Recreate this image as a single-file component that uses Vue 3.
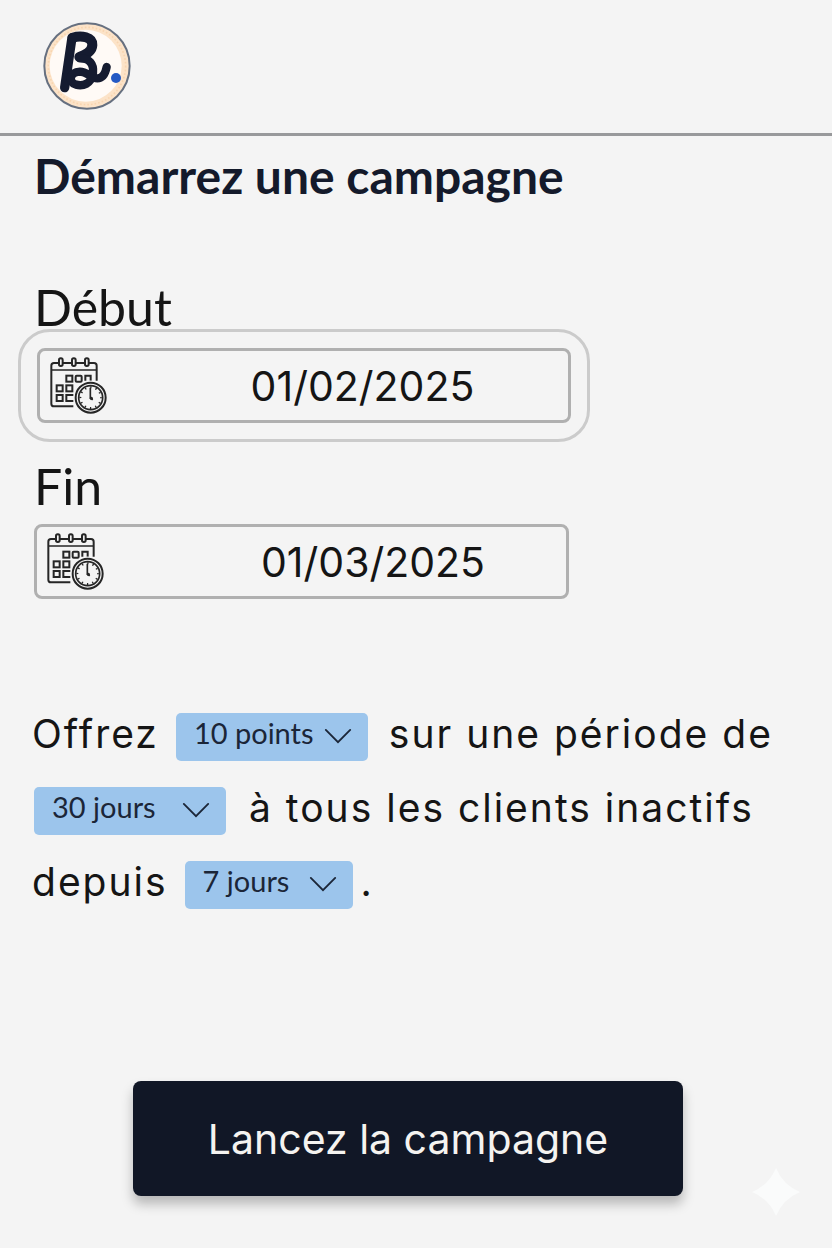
<script setup>
import { ref } from 'vue'

const dates = ref([
  { id: 'debut', label: 'Début', value: '01/02/2025', active: true },
  { id: 'fin', label: 'Fin', value: '01/03/2025', active: false },
])

const points = ref('10 points')
const period = ref('30 jours')
const inactivity = ref('7 jours')
</script>

<template>
  <div class="page">
    <header class="topbar">
      <svg class="logo" viewBox="39 33 264 264" role="img" aria-label="Logo">
        <circle cx="171" cy="165" r="128" fill="#fce3c8" stroke="#667080" stroke-width="6" />
        <circle cx="171" cy="165" r="116" fill="none" stroke="#f8d5b0" stroke-width="5" stroke-dasharray="5 6" />
        <circle cx="167" cy="164" r="108" fill="#fffaf6" />
        <g fill="none" stroke="#151b30" stroke-linecap="round" stroke-linejoin="round" stroke-width="28">
          <path d="M126 80 L104 230" />
          <path d="M128 80 C154 72 188 78 187 102 C186 122 166 132 148 138" stroke-width="30" />
          <path d="M150 142 C178 142 192 158 189 186 C184 220 158 226 138 221 C112 212 120 184 150 182 C172 182 182 202 202 202 C218 202 226 188 230 168" stroke-width="25" />
        </g>
        <circle cx="258" cy="201" r="15" fill="#2459c4" />
      </svg>
    </header>

    <main class="content">
      <h1 class="title">Démarrez une campagne</h1>

      <form class="form" @submit.prevent>
        <div v-for="d in dates" :key="d.id" class="field">
          <label class="label" :for="d.id">{{ d.label }}</label>
          <div :class="['frame', { active: d.active }]">
            <div class="box">
              <svg class="calendar" viewBox="115 108 180 180" aria-hidden="true">
                <g fill="none" stroke="#262626" stroke-width="6">
                  <path d="M188 259 H130 Q122 259 122 251 V137 Q122 129 130 129 H250 Q258 129 258 137 V182" />
                  <path d="M122 150 H258" stroke-width="4" />
                  <g fill="#f4f4f4">
                    <rect x="145" y="115" width="11" height="23" rx="5" />
                    <rect x="184" y="115" width="11" height="23" rx="5" />
                    <rect x="223" y="115" width="11" height="23" rx="5" />
                  </g>
                  <rect x="167" y="167" width="18" height="18" />
                  <rect x="195" y="167" width="18" height="18" rx="3" />
                  <path d="M224 182 V167 H240 V182" />
                  <rect x="138" y="196" width="18" height="18" />
                  <rect x="167" y="196" width="18" height="18" />
                  <rect x="138" y="225" width="18" height="18" />
                  <path d="M188 225 H167 V243 H188" />
                </g>
                <circle cx="240" cy="233" r="51" fill="#f4f4f4" />
                <circle cx="240" cy="233" r="45" fill="none" stroke="#262626" stroke-width="6" />
                <circle cx="240" cy="233" r="36" fill="none" stroke="#262626" stroke-width="5" />
                <circle cx="240" cy="233" r="31" fill="none" stroke="#262626" stroke-width="6" stroke-dasharray="4 12.2" stroke-dashoffset="2" />
                <path d="M239 203 V233 L246 240" fill="none" stroke="#262626" stroke-width="5" />
                <circle cx="242" cy="235" r="5" fill="#262626" />
              </svg>
              <input :id="d.id" v-model="d.value" class="date" type="text" inputmode="numeric" />
            </div>
          </div>
        </div>

        <p class="sentence">
          <span>Offrez</span>
          {{ ' ' }}
          <span class="chip">
            <select v-model="points" aria-label="Points offerts">
              <option>10 points</option>
              <option>20 points</option>
            </select>
            <svg viewBox="0 0 32 20" aria-hidden="true"><path d="M3 4 L16 17 L29 4" /></svg>
          </span>
          {{ ' ' }}
          <span>sur une période de</span>
          {{ ' ' }}
          <span class="chip first">
            <select v-model="period" aria-label="Durée de la période">
              <option>30 jours</option>
              <option>60 jours</option>
            </select>
            <svg viewBox="0 0 32 20" aria-hidden="true"><path d="M3 4 L16 17 L29 4" /></svg>
          </span>
          {{ ' ' }}
          <span>à tous les clients inactifs</span>
          {{ ' ' }}
          <span>depuis</span>
          {{ ' ' }}
          <span class="chip short">
            <select v-model="inactivity" aria-label="Durée d’inactivité">
              <option>7 jours</option>
              <option>14 jours</option>
            </select>
            <svg viewBox="0 0 32 20" aria-hidden="true"><path d="M3 4 L16 17 L29 4" /></svg>
          </span><span>.</span>
        </p>

        <button class="launch" type="submit">Lancez la campagne</button>
      </form>
    </main>

    <svg class="sparkle" viewBox="0 0 48 48" aria-hidden="true">
      <path d="M24 0 Q31 17 48 24 Q31 31 24 48 Q17 31 0 24 Q17 17 24 0 Z" fill="#fafbfb" />
    </svg>
  </div>
</template>

<style>
body {
  background: #f4f4f4;
}
</style>

<style scoped>
.page {
  position: relative;
  box-sizing: border-box;
  min-height: 100vh;
  background: #f4f4f4;
  color: #151515;
  font-family: Inter, "Liberation Sans", sans-serif;
}

.topbar {
  padding: 22px 43px 23px;
  border-bottom: 3px solid #98999b;
}

.logo {
  display: block;
  width: 88px;
  height: 88px;
}

.content {
  padding: 12px 50px 40px 34px;
}

.title {
  margin: 0 0 81px;
  color: #141a2b;
  font: 700 48px/56px Lato, sans-serif;
}

.form {
  display: flex;
  flex-direction: column;
}

.label {
  display: block;
  font: 400 50px/44px Lato, sans-serif;
}

.frame {
  box-sizing: border-box;
  max-width: 535px;
  margin-top: 16px;
}

.frame.active {
  max-width: 572px;
  margin: 0 0 22px -16px;
  padding: 16px;
  border: 3px solid #cbcbcb;
  border-radius: 32px;
}

.box {
  display: flex;
  align-items: center;
  box-sizing: border-box;
  height: 75px;
  padding: 0 12px 0 9px;
  border: 3px solid #b0b0b0;
  border-radius: 8px;
}

.calendar {
  flex: none;
  width: 60px;
  height: 60px;
}

.date {
  flex: 1;
  min-width: 0;
  padding: 0 0 0 86px;
  border: 0;
  outline: 0;
  background: none;
  color: inherit;
  font: 400 41px/48px Inter, sans-serif;
  text-align: center;
}

.active .date {
  padding-left: 60px;
}

.sentence {
  margin: 98px 0 0 -2px;
  font-size: 39px;
  line-height: 74px;
  letter-spacing: 2px;
}

.chip {
  display: inline-grid;
  grid-template-columns: 1fr;
  align-items: center;
  width: 192px;
  margin: 0 8px 0 4px;
  border-radius: 5px;
  background: #9cc5ec;
  vertical-align: middle;
  letter-spacing: normal;
}

.chip.first {
  margin: 0 10px 0 2px;
}

.chip.short {
  width: 168px;
}

.chip select {
  grid-area: 1 / 1;
  width: 100%;
  height: 48px;
  padding: 0 48px 8px 18px;
  border: 0;
  border-radius: 5px;
  appearance: none;
  background: none;
  color: #1b2638;
  font: 400 29px/36px Lato, sans-serif;
}

.chip svg {
  grid-area: 1 / 1;
  justify-self: end;
  width: 30px;
  height: 19px;
  margin: 0 15px 4px 0;
  pointer-events: none;
  fill: none;
  stroke: #1b2638;
  stroke-width: 2;
  stroke-linecap: round;
}

.launch {
  align-self: center;
  height: 115px;
  margin-top: 162px;
  padding: 0 75px;
  border: 0;
  border-radius: 8px;
  background: #111726;
  box-shadow: 0 8px 12px rgba(0, 0, 0, 0.25);
  color: #f5f3f0;
  font: 400 41px/52px Inter, sans-serif;
}

.sparkle {
  position: absolute;
  right: 32px;
  bottom: 32px;
  width: 48px;
  height: 48px;
}
</style>
